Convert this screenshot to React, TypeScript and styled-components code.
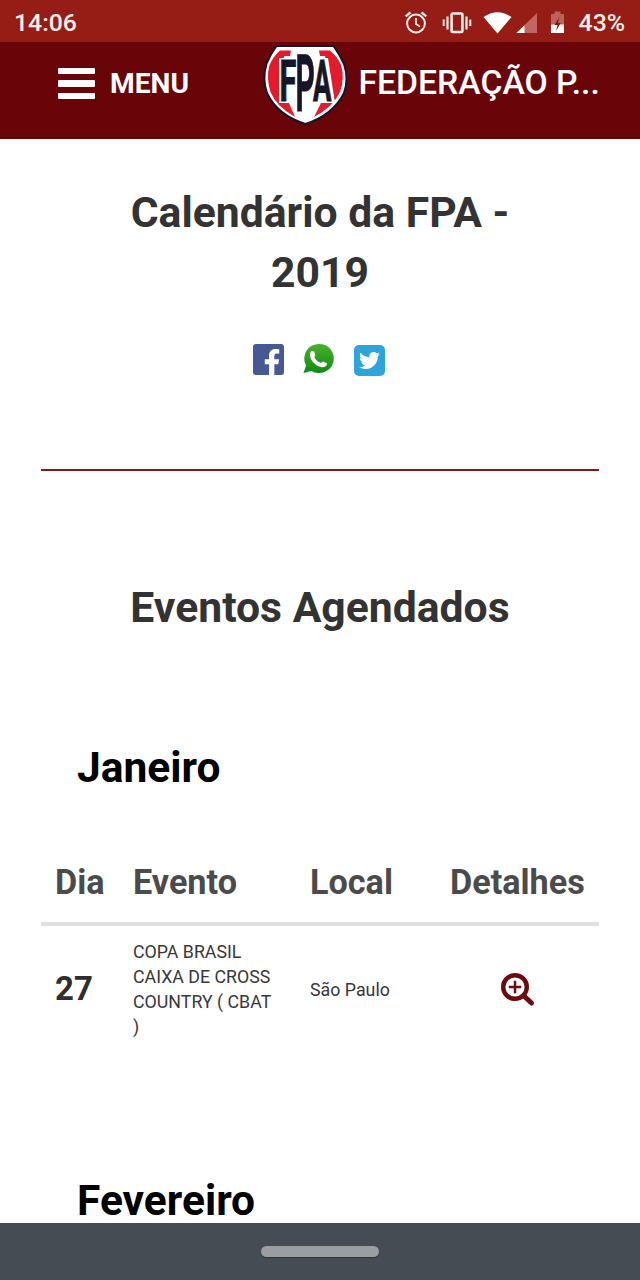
import React from "react";
import styled, { createGlobalStyle } from "styled-components";
import { FaFacebookF, FaTwitter } from "react-icons/fa";

const GlobalStyle = createGlobalStyle`
  *, *::before, *::after { box-sizing: border-box; }
  body { margin: 0; background: #fff; font-family: Roboto, "Liberation Sans", sans-serif; }
  h1, h2, h3 { margin: 0; }
  svg { display: block; flex: none; overflow: visible; }
`;

const Screen = styled.div`
  display: flex;
  flex-direction: column;
  width: 640px;
  height: 1280px;
  overflow: hidden;
  background: #fff;
`;

const StatusBar = styled.div`
  display: flex;
  align-items: center;
  justify-content: space-between;
  flex: none;
  height: 42px;
  padding: 3px 15px 0 14px;
  background: #961d15;
  color: #fff0ec;
  font-size: 24.8px;
  font-weight: 500;
`;

const StatusIcons = styled.div`
  display: flex;
  align-items: center;
`;

const Percent = styled.span`
  margin-left: 9px;
`;

const Header = styled.header`
  display: flex;
  flex: none;
  height: 96.5px;
  padding: 0 36px 0 58px;
  background: #690508;
  color: #fff;
`;

const MenuButton = styled.div`
  display: flex;
  flex: none;
  align-items: center;
  height: 83px;
  width: 205px;
  gap: 15px;
  font-size: 28.2px;
  font-weight: 700;
`;

const Bars = styled.div`
  display: grid;
  gap: 6px;
  width: 37px;
`;

const Bar = styled.span`
  height: 6.4px;
  border-radius: 1px;
  background: #fff;
`;

const Brand = styled.div`
  display: flex;
  align-items: flex-start;
  gap: 10.5px;
`;

const BrandName = styled.span`
  font-size: 33.7px;
  font-weight: 500;
  line-height: 82px;
  white-space: nowrap;
`;

const Page = styled.main`
  flex: 1;
  min-height: 0;
  padding: 43.5px 41px 0;
`;

const Title = styled.h1`
  font-size: 42.7px;
  line-height: 60px;
  font-weight: 700;
  color: #333;
  text-align: center;
`;

const ShareRow = styled.div`
  display: flex;
  justify-content: center;
  gap: 19px;
  height: 34px;
  margin-top: 41px;
  padding: 1px 2px 0 0;
`;

const ShareTile = styled.div<{ $bg: string; $radius: number; $top: number }>`
  display: flex;
  justify-content: center;
  width: 31px;
  height: 31px;
  margin-top: ${(p) => p.$top}px;
  border-radius: ${(p) => p.$radius}px;
  background: ${(p) => p.$bg};
  color: #fff;
  overflow: hidden;
`;

const FacebookGlyph = styled(FaFacebookF)`
  width: 18px;
  height: 27px;
  margin: 5px 0 0 7px;
`;

const TwitterGlyph = styled(FaTwitter)`
  width: 21px;
  height: 21px;
  margin-top: 5px;
`;

const Divider = styled.div`
  height: 2px;
  margin-top: 92px;
  background: #7d1a1d;
`;

const SectionTitle = styled.h2`
  margin-top: 106px;
  font-size: 42.7px;
  line-height: 60px;
  font-weight: 700;
  color: #333;
  text-align: center;
`;

const Month = styled.h3<{ $top: number }>`
  margin-top: ${(p) => p.$top}px;
  padding-left: 36px;
  font-size: 42.5px;
  line-height: 60px;
  font-weight: 700;
  color: #000;
`;

const Row = styled.div`
  display: grid;
  grid-template-columns: 78px 177px 140px 1fr;
  align-items: center;
  padding-left: 14px;
`;

const HeadRow = styled(Row)`
  height: 84px;
  margin-top: 44px;
  border-bottom: 4px solid #dfdfdf;
  color: #4b4b4b;
  font-size: 34.2px;
  font-weight: 700;
`;

const EventRow = styled(Row)`
  height: 126px;
  color: #383838;
  font-size: 17.8px;
  line-height: 25px;
`;

const Day = styled.div`
  padding-bottom: 1px;
  font-size: 33px;
  font-weight: 700;
  color: #2f2f2f;
`;

const EventName = styled.div`
  width: 146px;
`;

const Details = styled.div`
  padding: 1px 0 0 51px;
`;

const NavBar = styled.div`
  display: flex;
  justify-content: center;
  flex: none;
  height: 57px;
  padding-top: 23px;
  background: #454c53;
`;

const HomePill = styled.div`
  width: 118px;
  height: 11px;
  border-radius: 6px;
  background: #9b9ea1;
  box-shadow: 0 1px 1px #30343c;
`;

const StatusGlyphs = () => (
  <svg width="166" height="28" viewBox="0 0 166 28">
    <g fill="none" stroke="#fff0ec" strokeWidth="2">
      <circle cx="12" cy="14.500" r="8.900" />
      <path d="M12 9v6l4 2.600" strokeWidth="1.700" />
      <path d="M1.700 7.300 6.500 3.300M22.300 7.300 17.500 3.300" strokeWidth="2.400" />
      <rect x="47.600" y="4.500" width="10.800" height="18.500" rx="1.200" strokeWidth="2.600" />
      <path d="M43.500 7.500v13M62.500 7.500v13" strokeWidth="2.200" />
      <path d="M39.700 10.500v6.500M66.300 10.500v6.500" strokeWidth="2" />
    </g>
    <path d="M79.500 8Q93.500-1.500 107.500 8L93.500 24.500Z" fill="#fff" />
    <path d="M133 4V24H112.500Z" fill="#bf6760" />
    <path d="M120.500 16.200V24H112.500Z" fill="#fff" />
    <path d="M147 5h3.500V2.500h6V5H160v11H147Z" fill="#ba625b" />
    <path d="M147 15.500h13V24h-13Z" fill="#fff" />
    <path d="m155.500 8-5 8h3l-1.500 6 4.700-8h-2.900Z" fill="#82130f" />
  </svg>
);

const ClubShield = () => (
  <svg width="85" height="92" viewBox="0 0 85 92">
    <path
      d="M13.500 4H70.500Q77 13 81 22Q86 37 81 51Q70 73 42.500 82Q14 73 4 51Q-1 37 3.500 22Q7.500 12 13.500 4Z"
      fill="#fff" stroke="#171528" strokeWidth="2"
    />
    <path d="M17 8.500H28L27 14H21V61H26L32 75Q13 64 7.500 50Q3 36 6.500 23Q10.500 14 17 8.500Z" fill="#e31b2a" />
    <path d="M67 8.500H56L57 14H62L72 61H58L51 75Q70 65 77 50Q82 36 78 23Q74 14 67 8.500Z" fill="#e31b2a" />
    <path d="M16 16H32V10H51V16H65L72 61H51V71H32V61H16Z" fill="#fff" />
    <g fill="#171528" stroke="#171528" strokeWidth="1" fontFamily="Roboto, sans-serif" fontWeight="700">
      <text transform="translate(16.500 59) scale(.54 1)" fontSize="57">F</text>
      <text transform="translate(32.500 69) scale(.38 1)" fontSize="79">P</text>
      <text transform="translate(50 59) scale(.48 1)" fontSize="57">A</text>
    </g>
  </svg>
);

const WhatsAppMark = () => (
  <svg width="32" height="32" viewBox="1 1 32 32">
    <defs>
      <linearGradient id="wa" x1="0" y1="0" x2="0" y2="1">
        <stop offset="0" stopColor="#47b32c" />
        <stop offset="1" stopColor="#118a12" />
      </linearGradient>
    </defs>
    <path d="M17 .9A14.600 14.600 0 1 1 9.500 27.900L1.500 30 4 22.500A14.600 14.600 0 0 1 17 .9Z" fill="url(#wa)" />
    <path d="M9 8.500c1.500-1.300 2.700-.8 3.100.3l1.300 2.900c.3.900-1.300 1.800-1 2.600 1.300 2.600 3.400 4.600 6.200 5.500.8.200 1.800-1.700 2.600-1.300l3.200 1.600c1.200.6.700 2-.5 2.900-3.500 2.600-8.600.6-12-2.900C8.700 16.900 6.600 11.200 9 8.500Z" fill="#fff" />
  </svg>
);

const ZoomInMark = () => (
  <svg width="34" height="34" viewBox="0 0 34 34" fill="none" stroke="#6b0b10">
    <circle cx="14" cy="14" r="11.800" strokeWidth="4.400" />
    <path d="M23 23 30.500 30" strokeWidth="5" strokeLinecap="round" />
    <path d="M14 7.800v12.400M7.800 14h12.400" strokeWidth="2.500" />
  </svg>
);

export default function App() {
  return (
    <Screen>
      <GlobalStyle />
      <StatusBar>
        <span>14:06</span>
        <StatusIcons>
          <StatusGlyphs />
          <Percent>43%</Percent>
        </StatusIcons>
      </StatusBar>
      <Header>
        <MenuButton>
          <Bars>
            <Bar />
            <Bar />
            <Bar />
          </Bars>
          <span>MENU</span>
        </MenuButton>
        <Brand>
          <ClubShield />
          <BrandName>FEDERAÇÃO P...</BrandName>
        </Brand>
      </Header>
      <Page>
        <Title>
          Calendário da FPA -<br />
          2019
        </Title>
        <ShareRow>
          <ShareTile $bg="#475993" $radius={3} $top={0}>
            <FacebookGlyph />
          </ShareTile>
          <WhatsAppMark />
          <ShareTile $bg="#2ea5da" $radius={5} $top={1}>
            <TwitterGlyph />
          </ShareTile>
        </ShareRow>
        <Divider />
        <SectionTitle>Eventos Agendados</SectionTitle>
        <Month $top={101}>Janeiro</Month>
        <HeadRow>
          <span>Dia</span>
          <span>Evento</span>
          <span>Local</span>
          <span>Detalhes</span>
        </HeadRow>
        <EventRow>
          <Day>27</Day>
          <EventName>COPA BRASIL CAIXA DE CROSS COUNTRY ( CBAT )</EventName>
          <span>São Paulo</span>
          <Details>
            <ZoomInMark />
          </Details>
        </EventRow>
        <Month $top={119}>Fevereiro</Month>
      </Page>
      <NavBar>
        <HomePill />
      </NavBar>
    </Screen>
  );
}
